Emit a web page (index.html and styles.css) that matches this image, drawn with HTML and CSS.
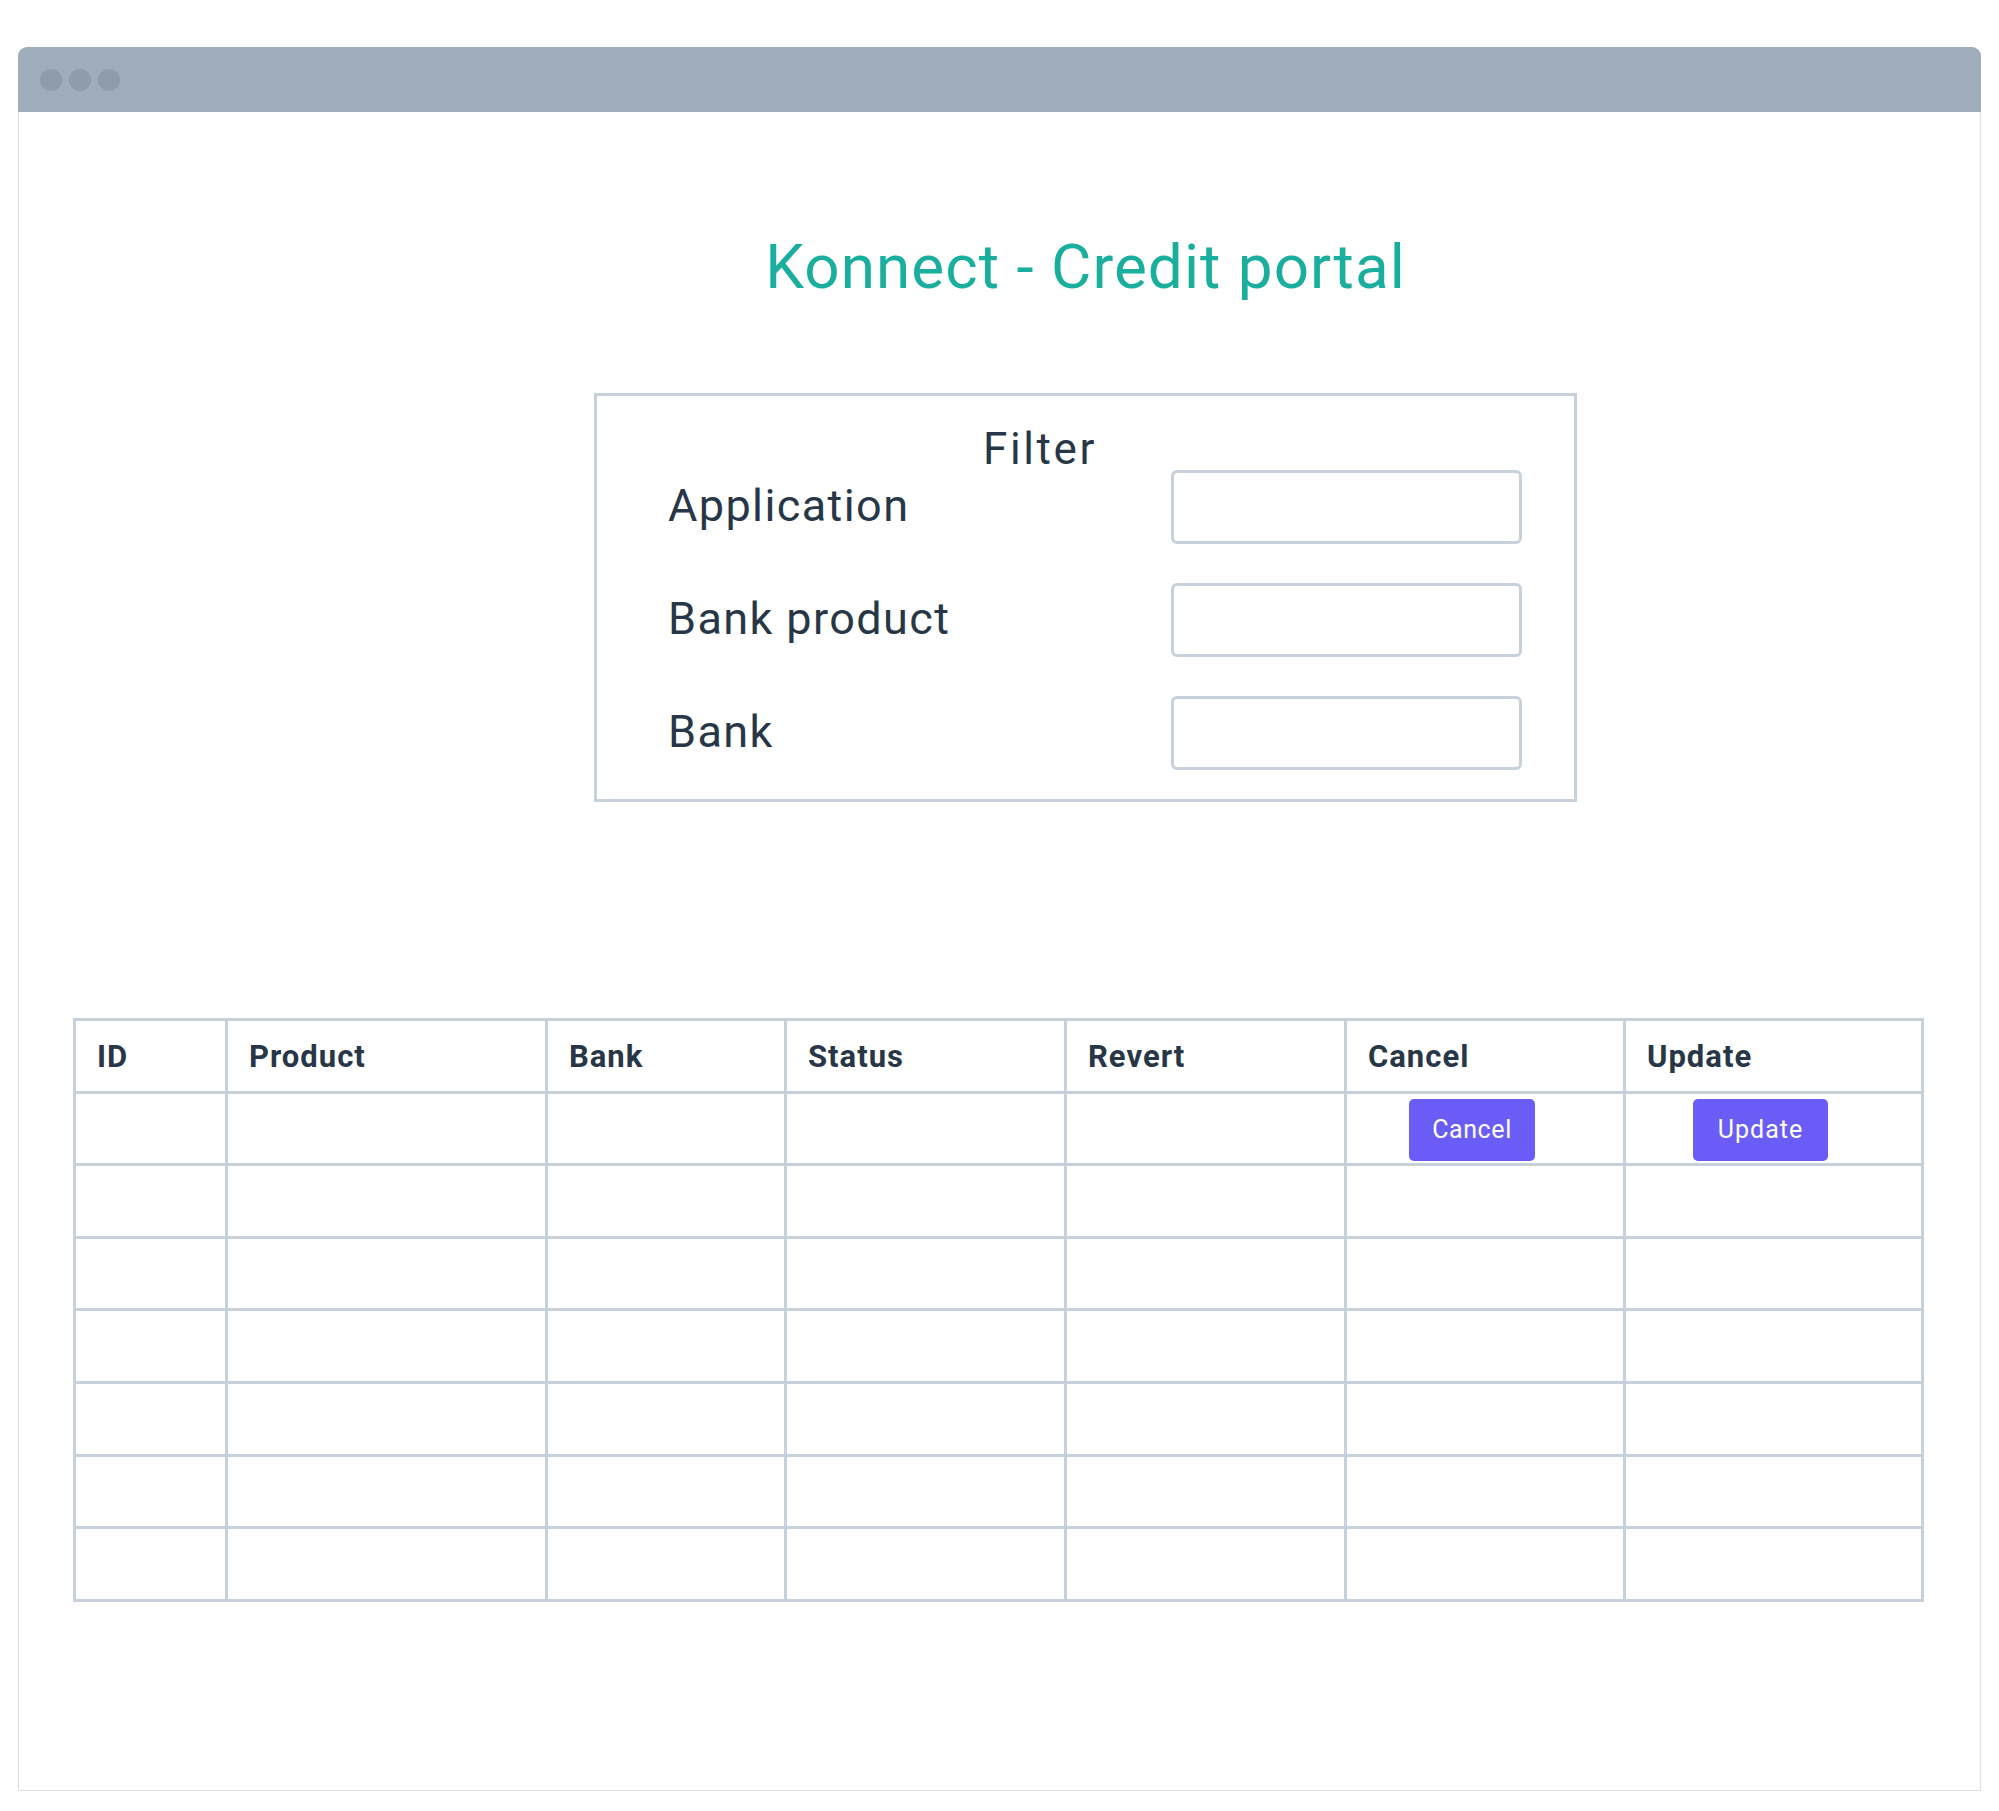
FILE: index.html
```html
<!DOCTYPE html>
<html lang="en">
<head>
<meta charset="utf-8">
<title>Konnect - Credit portal</title>
<link rel="stylesheet" href="styles.css">
</head>
<body>
<div class="window">
  <div class="titlebar">
    <span class="dot"></span><span class="dot"></span><span class="dot"></span>
  </div>
  <div class="content">
    <div class="hero">
      <h1 class="title">Konnect - Credit portal</h1>
      <div class="filter">
        <div class="filter-head">Filter</div>
        <div class="filter-rows">
          <div class="filter-row"><span class="label">Application</span><div class="input"></div></div>
          <div class="filter-row"><span class="label">Bank product</span><div class="input"></div></div>
          <div class="filter-row"><span class="label">Bank</span><div class="input"></div></div>
        </div>
      </div>
    </div>
    <div class="table">
      <div class="cell head">ID</div>
      <div class="cell head">Product</div>
      <div class="cell head">Bank</div>
      <div class="cell head">Status</div>
      <div class="cell head">Revert</div>
      <div class="cell head">Cancel</div>
      <div class="cell head">Update</div>

      <div class="cell"></div><div class="cell"></div><div class="cell"></div><div class="cell"></div><div class="cell"></div>
      <div class="cell action"><span class="btn">Cancel</span></div>
      <div class="cell action"><span class="btn btn-wide">Update</span></div>

      <div class="cell"></div><div class="cell"></div><div class="cell"></div><div class="cell"></div><div class="cell"></div><div class="cell"></div><div class="cell"></div>
      <div class="cell"></div><div class="cell"></div><div class="cell"></div><div class="cell"></div><div class="cell"></div><div class="cell"></div><div class="cell"></div>
      <div class="cell"></div><div class="cell"></div><div class="cell"></div><div class="cell"></div><div class="cell"></div><div class="cell"></div><div class="cell"></div>
      <div class="cell"></div><div class="cell"></div><div class="cell"></div><div class="cell"></div><div class="cell"></div><div class="cell"></div><div class="cell"></div>
      <div class="cell"></div><div class="cell"></div><div class="cell"></div><div class="cell"></div><div class="cell"></div><div class="cell"></div><div class="cell"></div>
      <div class="cell"></div><div class="cell"></div><div class="cell"></div><div class="cell"></div><div class="cell"></div><div class="cell"></div><div class="cell"></div>
    </div>
  </div>
</div>
</body>
</html>
```
FILE: styles.css
```css
* { box-sizing: border-box; }
html, body { margin: 0; padding: 0; background: #ffffff; }
body {
  font-family: Roboto, "Liberation Sans", sans-serif;
  color: #283747;
  width: 1999px;
  height: 1811px;
}
.window {
  margin: 47px 0 0 18px;
  width: 1963px;
}
.titlebar {
  height: 65px;
  background: #9eadb9;
  border-radius: 9px 9px 0 0;
  display: flex;
  align-items: center;
  gap: 7px;
  padding-left: 22px;
}
.dot {
  width: 22px;
  height: 22px;
  border-radius: 50%;
  background: #8e9daa;
}
.content {
  height: 1679px;
  border: 1px solid #dedede;
  border-top: none;
  background: #ffffff;
  padding-top: 119px;
}
.hero {
  display: flex;
  flex-direction: column;
  align-items: center;
  padding-left: 172px;
}
.title {
  margin: 0;
  font-size: 62px;
  line-height: 72px;
  font-weight: 400;
  color: #1aae9f;
  letter-spacing: 1.05px;
}
.filter {
  margin-top: 90px;
  width: 983px;
  height: 409px;
  border: 3px solid #c6d1db;
  padding: 32px 52px 0 71px;
}
.filter-head {
  font-size: 44px;
  line-height: 42px;
  padding-left: 315px;
  letter-spacing: 2.6px;
}
.filter-rows {
  display: flex;
  flex-direction: column;
  gap: 39px;
}
.filter-row {
  display: flex;
  align-items: center;
  justify-content: space-between;
}
.label {
  font-size: 45px;
  letter-spacing: 1.4px;
  padding-bottom: 4px;
}
.input {
  width: 351px;
  height: 74px;
  border: 3px solid #c6d1db;
  border-radius: 6px;
  background: #ffffff;
}
.table {
  margin: 216px 0 0 54px;
  display: grid;
  grid-template-columns: 149px 317px 236px 277px 277px 276px 295px;
  grid-auto-rows: 69.6px;
  gap: 3px;
  padding: 3px;
  background: #c6d1db;
  width: max-content;
}
.cell {
  background: #ffffff;
}
.head {
  display: flex;
  align-items: center;
  padding-left: 21px;
  padding-top: 2px;
  font-size: 31px;
  font-weight: 700;
  letter-spacing: 1px;
}
.action {
  display: flex;
  align-items: center;
  justify-content: center;
  padding-right: 26px;
  padding-top: 3px;
}
.btn {
  height: 62px;
  padding: 0 23px;
  display: flex;
  align-items: center;
  background: #6a5cf6;
  border-radius: 5px;
  color: #ffffff;
  font-size: 25px;
  letter-spacing: 0.6px;
}
.btn-wide {
  padding: 0 25px;
  letter-spacing: 1px;
}
```
